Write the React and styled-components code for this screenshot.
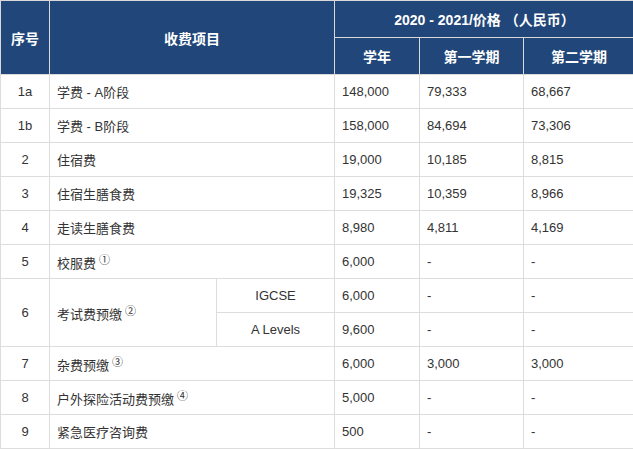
import React from 'react';
import styled, { createGlobalStyle } from 'styled-components';

const Global = createGlobalStyle`
  body { margin: 0; background: #fff; font-family: "Liberation Sans", Arial, "Noto Sans CJK SC", sans-serif; }
`;

const Table = styled.table`
  border-collapse: collapse;
  table-layout: fixed;
  width: 634px;
  font-size: 13px;
  color: #333;
`;

const Th = styled.th`
  background: #21477a;
  color: #fff;
  font-weight: bold;
  font-size: 14px;
  border: 1px solid #d9d9d9;
  height: 36px;
  padding: 0;
  text-align: center;
`;

const Td = styled.td`
  border: 1px solid #ddd;
  height: 33px;
  padding: 0 ${p => (p.$center ? 0 : 7)}px;
  text-align: ${p => (p.$center ? 'center' : 'left')};
  white-space: nowrap;
`;

const Note = styled.sup`
  font-size: 11px;
  margin-left: 3px;
  vertical-align: 4px;
`;

const rows = [
  ['1a', '学费 - A阶段', null, '148,000', '79,333', '68,667'],
  ['1b', '学费 - B阶段', null, '158,000', '84,694', '73,306'],
  ['2', '住宿费', null, '19,000', '10,185', '8,815'],
  ['3', '住宿生膳食费', null, '19,325', '10,359', '8,966'],
  ['4', '走读生膳食费', null, '8,980', '4,811', '4,169'],
  ['5', '校服费', '①', '6,000', '-', '-'],
];
const tail = [
  ['7', '杂费预缴', '③', '6,000', '3,000', '3,000'],
  ['8', '户外探险活动费预缴', '④', '5,000', '-', '-'],
  ['9', '紧急医疗咨询费', null, '500', '-', '-'],
];

const Row = ({ r }) => (
  <tr>
    <Td $center>{r[0]}</Td>
    <Td colSpan={2}>{r[1]}{r[2] && <Note>{r[2]}</Note>}</Td>
    <Td>{r[3]}</Td>
    <Td>{r[4]}</Td>
    <Td>{r[5]}</Td>
  </tr>
);

export default function App() {
  return (
    <>
      <Global />
      <Table>
        <colgroup>
          <col style={{ width: 49 }} />
          <col style={{ width: 167 }} />
          <col style={{ width: 118 }} />
          <col style={{ width: 85 }} />
          <col style={{ width: 104 }} />
          <col style={{ width: 111 }} />
        </colgroup>
        <thead>
          <tr>
            <Th rowSpan={2}>序号</Th>
            <Th rowSpan={2} colSpan={2}>收费项目</Th>
            <Th colSpan={3}>2020 - 2021/价格 （人民币）</Th>
          </tr>
          <tr>
            <Th>学年</Th>
            <Th>第一学期</Th>
            <Th>第二学期</Th>
          </tr>
        </thead>
        <tbody>
          {rows.map(r => <Row key={r[0]} r={r} />)}
          <tr>
            <Td $center rowSpan={2}>6</Td>
            <Td rowSpan={2}>考试费预缴<Note>②</Note></Td>
            <Td $center>IGCSE</Td>
            <Td>6,000</Td>
            <Td>-</Td>
            <Td>-</Td>
          </tr>
          <tr>
            <Td $center>A Levels</Td>
            <Td>9,600</Td>
            <Td>-</Td>
            <Td>-</Td>
          </tr>
          {tail.map(r => <Row key={r[0]} r={r} />)}
        </tbody>
      </Table>
    </>
  );
}
